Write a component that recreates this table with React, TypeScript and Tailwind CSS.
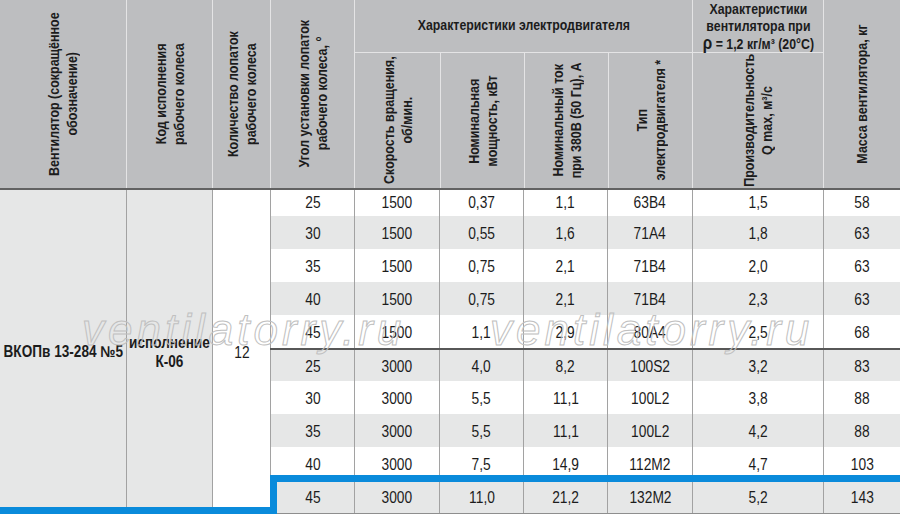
import * as React from "react";

// no narrow face installed, so Liberation Sans is squeezed to ~85% width
const COLS = ["w-[84px]", "w-[85px]", "w-[84px]", "w-[84px]", "w-[85px]", "w-[131px]", "w-[77px]"];

const TOP_ROWS: { h: string; cells: string[] }[] = [
  { h: "h-[26px] pt-0", cells: ["25", "1500", "0,37", "1,1", "63В4", "1,5", "58"] },
  { h: "h-[33px] pt-[3px]", cells: ["30", "1500", "0,55", "1,6", "71А4", "1,8", "63"] },
  { h: "h-[33px] pt-[3px]", cells: ["35", "1500", "0,75", "2,1", "71В4", "2,0", "63"] },
  { h: "h-[33px] pt-[3px]", cells: ["40", "1500", "0,75", "2,1", "71В4", "2,3", "63"] },
  { h: "h-[33px] pt-[3px]", cells: ["45", "1500", "1,1", "2,9", "80А4", "2,5", "68"] },
];

const BOTTOM_ROWS: { h: string; cells: string[] }[] = [
  { h: "h-[31px] pt-[3px]", cells: ["25", "3000", "4,0", "8,2", "100S2", "3,2", "83"] },
  { h: "h-[33px] pt-[3px]", cells: ["30", "3000", "5,5", "11,1", "100L2", "3,8", "88"] },
  { h: "h-[33px] pt-[3px]", cells: ["35", "3000", "5,5", "11,1", "100L2", "4,2", "88"] },
  { h: "h-[33px] pt-[3px]", cells: ["40", "3000", "7,5", "14,9", "112М2", "4,7", "103"] },
  { h: "h-[33px] pt-[3px]", cells: ["45", "3000", "11,0", "21,2", "132М2", "5,2", "143"] },
];

function VText({ lines }: { lines: React.ReactNode[] }) {
  return (
    <div className="[writing-mode:vertical-rl] rotate-180 scale-y-[0.86] text-center leading-[18px] text-[14.5px] font-bold whitespace-nowrap">
      {lines.map((l, i) => (
        <div key={i}>{l}</div>
      ))}
    </div>
  );
}

function Row({ h, cells, gray }: { h: string; cells: string[]; gray: boolean }) {
  return (
    <div className={`flex shrink-0 ${h.split(" ")[0]} ${gray ? "bg-[#e6e7e7]" : "bg-white"}`}>
      {cells.map((c, i) => (
        <div
          key={i}
          className={`${COLS[i]} ${h.split(" ")[1]} shrink-0 border-l border-[#a2a2a2] flex items-center justify-center text-[16px]`}
        >
          <span className="inline-block scale-x-[0.86]">{c}</span>
        </div>
      ))}
    </div>
  );
}

export default function App() {
  return (
    <div className="relative w-[900px] h-[514px] overflow-hidden bg-white text-[#1c1c1c] font-['Liberation_Sans',Arial,sans-serif]">
      {/* header */}
      <div className="flex h-[188px] bg-[#bdbec0]">
        <div className="w-[126px] shrink-0 flex items-center justify-center">
          <VText lines={["Вентилятор (сокращённое", "обозначение)"]} />
        </div>
        <div className="w-[86px] shrink-0 border-l border-[#e4e4e5] flex items-center justify-center">
          <VText lines={["Код исполнения", "рабочего колеса"]} />
        </div>
        <div className="w-[58px] shrink-0 border-l border-[#e4e4e5] flex items-center justify-center">
          <VText lines={["Количество лопаток", "рабочего колеса"]} />
        </div>
        <div className="w-[84px] shrink-0 border-l border-[#e4e4e5] flex items-center justify-center">
          <VText lines={["Угол установки лопаток", "рабочего колеса, °"]} />
        </div>
        <div className="w-[338px] shrink-0 border-l border-[#e4e4e5] flex flex-col">
          <div className="h-[52px] shrink-0 flex items-center justify-center text-[14.5px] font-bold">
            <span className="inline-block scale-x-[0.85] whitespace-nowrap">Характеристики электродвигателя</span>
          </div>
          <div className="flex-1 min-h-0 flex border-t border-[#e4e4e5]">
            <div className="w-[85px] shrink-0 flex items-center justify-center">
              <VText lines={["Скорость вращения,", "об/мин."]} />
            </div>
            <div className="w-[84px] shrink-0 border-l border-[#e4e4e5] flex items-center justify-center">
              <VText lines={["Номинальная", "мощность, кВт"]} />
            </div>
            <div className="w-[84px] shrink-0 border-l border-[#e4e4e5] flex items-center justify-center">
              <VText lines={["Номинальный ток", "при 380В (50 Гц), А"]} />
            </div>
            <div className="w-[85px] shrink-0 border-l border-[#e4e4e5] flex items-center justify-center">
              <VText lines={["Тип", "электродвигателя *"]} />
            </div>
          </div>
        </div>
        <div className="w-[131px] shrink-0 border-l border-[#e4e4e5] flex flex-col">
          <div className="h-[52px] shrink-0 flex items-center justify-center pt-[1px]">
            <div className="flex flex-col items-center text-[14.5px] font-bold leading-[17px] whitespace-nowrap scale-x-[0.85]">
              <div>Характеристики</div>
              <div>вентилятора при</div>
              <div>
                <span className="text-[18px]">ρ</span> = 1,2 кг/м³ (20°C)
              </div>
            </div>
          </div>
          <div className="flex-1 min-h-0 border-t border-[#e4e4e5] flex items-center justify-center">
            <VText lines={["Производительность", "Q max, м³/с"]} />
          </div>
        </div>
        <div className="w-[77px] shrink-0 border-l border-[#e4e4e5] flex items-center justify-center">
          <VText lines={["Масса вентилятора, кг"]} />
        </div>
      </div>
      <div className="h-[2px] bg-[#626262]" />

      {/* body */}
      <div className="flex h-[324px] border-b border-[#8e8e8e]">
        <div className="w-[126px] shrink-0 bg-[#e6e7e7] flex items-center justify-center pt-[1px] text-[16px] font-bold whitespace-nowrap">
          <span className="inline-block scale-x-[0.85]">ВКОПв 13-284 №5</span>
        </div>
        <div className="w-[86px] shrink-0 bg-[#e6e7e7] border-l border-[#a2a2a2] flex items-center justify-center">
          <div className="flex flex-col items-center text-[16px] font-bold leading-[19px] whitespace-nowrap scale-x-[0.85]">
            <div>исполнение</div>
            <div>К-06</div>
          </div>
        </div>
        <div className="w-[58px] shrink-0 bg-white border-l border-[#a2a2a2] flex items-center justify-center pt-[2px] text-[16px]">
          <span className="inline-block scale-x-[0.86]">12</span>
        </div>
        <div className="flex-1 flex flex-col">
          {TOP_ROWS.map((r, i) => (
            <Row key={i} h={r.h} cells={r.cells} gray={i % 2 === 1} />
          ))}
          <div className="h-[2px] shrink-0 bg-[#575757]" />
          {BOTTOM_ROWS.map((r, i) => (
            <Row key={i} h={r.h} cells={r.cells} gray={i % 2 === 0} />
          ))}
        </div>
      </div>

      {/* watermark */}
      <div className="pointer-events-none absolute left-[82px] top-[308px] text-[44px] leading-none italic tracking-[4px] text-transparent [-webkit-text-stroke:1px_#c0c0c0]">
        ventilatorry.ru
      </div>
      <div className="pointer-events-none absolute left-[490px] top-[308px] text-[44px] leading-none italic tracking-[4px] text-transparent [-webkit-text-stroke:1px_#c0c0c0]">
        ventilatorry.ru
      </div>

      {/* blue highlight outline */}
      <div className="absolute left-[270px] top-[475px] w-[630px] h-[7px] bg-[#0a8bdb]" />
      <div className="absolute left-[270px] top-[475px] w-[7px] h-[39px] bg-[#0a8bdb]" />
      <div className="absolute left-0 top-[507px] w-[277px] h-[7px] bg-[#0a8bdb]" />
    </div>
  );
}
